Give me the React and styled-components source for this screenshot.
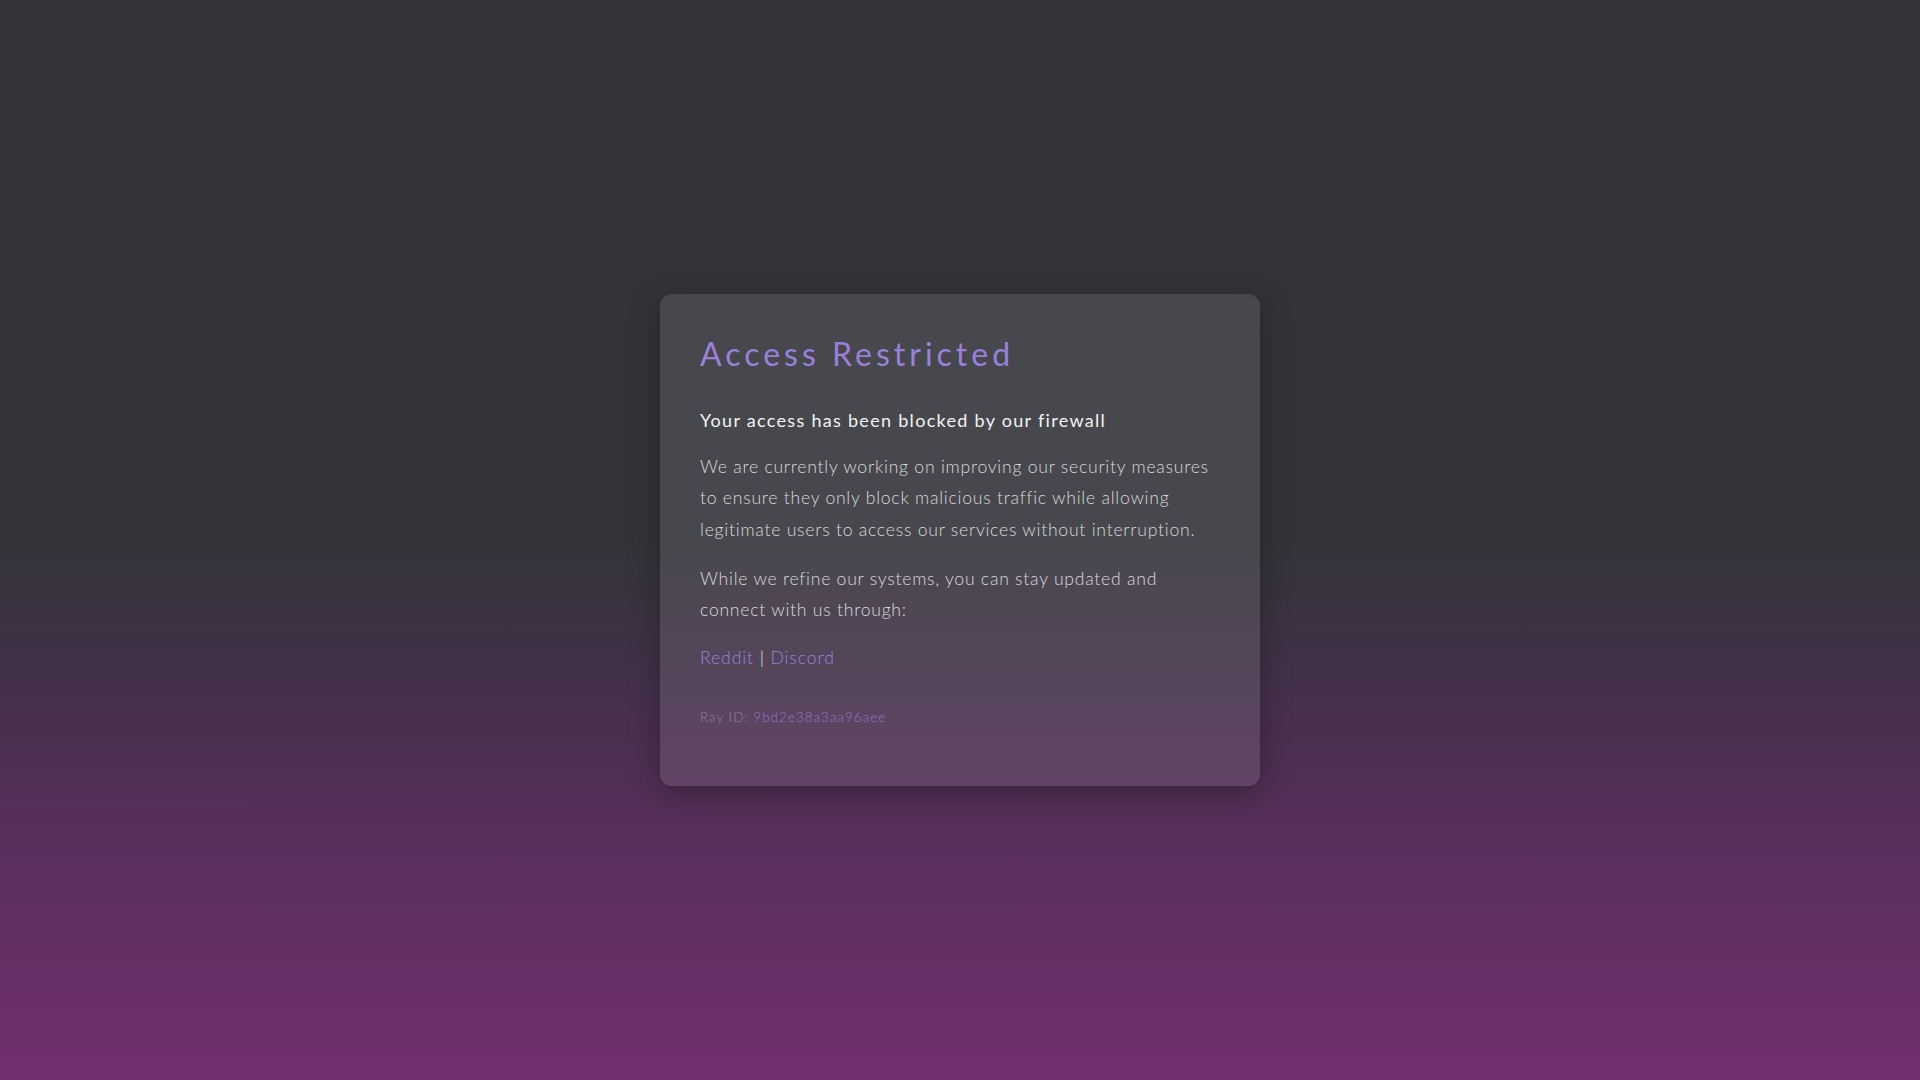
import React from 'react';
import styled, { createGlobalStyle } from 'styled-components';

const GlobalStyle = createGlobalStyle`
  html, body {
    margin: 0;
    padding: 0;
  }
  body {
    font-family: 'Lato', 'Open Sans', sans-serif;
  }
`;

const Page = styled.main`
  min-height: 100vh;
  display: flex;
  align-items: center;
  justify-content: center;
  background: linear-gradient(180deg, #333438 0%, #333439 50%, #46304c 65%, #5c2f5e 80%, #722f70 100%);
`;

const Card = styled.section`
  width: 600px;
  box-sizing: border-box;
  padding: 40px 40px 59px;
  background: rgba(255, 255, 255, 0.1);
  border-radius: 12px;
  box-shadow: 0 8px 32px rgba(0, 0, 0, 0.3);
`;

const Title = styled.h1`
  margin: 0;
  font-size: 32px;
  line-height: 40px;
  font-weight: 400;
  letter-spacing: 4px;
  color: #9b80da;
`;

const Subtitle = styled.h2`
  margin: 32px 0 0;
  font-size: 18px;
  line-height: 28px;
  font-weight: 400;
  letter-spacing: 1.3px;
  color: #f2f2f2;
`;

const Text = styled.p`
  margin: 17px 0 0;
  font-size: 17.6px;
  line-height: 1.8;
  font-weight: 300;
  letter-spacing: 0.75px;
  color: #d9d9db;
`;

const Links = styled.div`
  margin-top: 16px;
  font-size: 17.6px;
  line-height: 1.8;
  font-weight: 300;
  letter-spacing: 0.9px;
  color: #e6e6e6;
`;

const Link = styled.a`
  color: #9b80da;
  text-decoration: none;
`;

const Ray = styled.div`
  margin-top: 34px;
  font-size: 13.5px;
  line-height: 20px;
  font-weight: 300;
  letter-spacing: 1px;
  color: #8d8298;
`;

const RayValue = styled.span`
  color: #9078c6;
`;

export default function App() {
  return (
    <>
      <GlobalStyle />
      <Page>
        <Card>
          <Title>Access Restricted</Title>
          <Subtitle>Your access has been blocked by our firewall</Subtitle>
          <Text>
            We are currently working on improving our security measures to ensure they only block
            malicious traffic while allowing legitimate users to access our services without
            interruption.
          </Text>
          <Text>
            While we refine our systems, you can stay updated and connect with us through:
          </Text>
          <Links>
            <Link href="#">Reddit</Link> | <Link href="#">Discord</Link>
          </Links>
          <Ray>
            Ray ID: <RayValue>9bd2e38a3aa96aee</RayValue>
          </Ray>
        </Card>
      </Page>
    </>
  );
}
